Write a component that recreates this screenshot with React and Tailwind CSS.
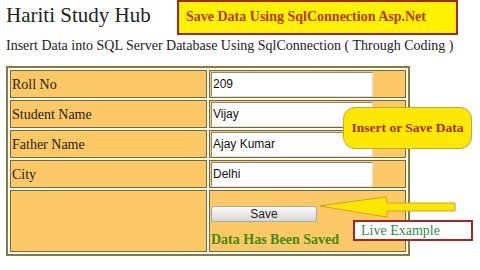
export default function App() {
  const rows = [
    ["Roll No", "209"],
    ["Student Name", "Vijay"],
    ["Father Name", "Ajay Kumar"],
    ["City", "Delhi"],
  ];

  return (
    <div className="relative w-[480px] h-[270px] bg-white overflow-hidden font-['Liberation_Serif',serif] text-[#222]">
      <div className="flex items-start">
        <h1 className="pl-[6px] pt-[4px] w-[177px] text-[21px] leading-[22px] text-[#222]">Hariti Study Hub</h1>
        <div className="w-[281px] h-[35px] bg-[#fff200] border-2 border-[#9b2c1a] flex items-center pl-[7px] pb-[3px]">
          <span className="font-bold text-[14px] text-[#b4380f]">Save Data Using SqlConnection Asp.Net</span>
        </div>
      </div>

      <p className="pl-[6px] mt-[3px] text-[14px] leading-[16px] text-[#222]">
        Insert Data into SQL Server Database Using SqlConnection ( Through Coding )
      </p>

      <table className="ml-[6px] mt-[12px] w-[404px] border-2 border-[#8a7a3c] border-separate border-spacing-[2px] bg-white">
        <tbody>
          {rows.map(([label, value]) => (
            <tr key={label} className="h-[28px]">
              <td className="w-[197px] bg-[#fdc966] border border-[#7a6a30] px-[1px] text-[14px]">{label}</td>
              <td className="bg-[#fdc966] border border-[#7a6a30] px-[1px] py-0">
                <input
                  readOnly
                  value={value}
                  className="block w-[162px] h-[25px] bg-white border border-t-[#8a8a8a] border-l-[#8a8a8a] border-r-[#e0e0e0] border-b-[#e0e0e0] pl-[1px] text-[12px] text-[#111] font-['Liberation_Sans',sans-serif] outline-none"
                />
              </td>
            </tr>
          ))}
          <tr className="h-[62px]">
            <td className="bg-[#fdc966] border border-[#7a6a30]"></td>
            <td className="bg-[#fdc966] border border-[#7a6a30] px-[1px] align-top pt-[15px]">
              <button className="block w-[106px] h-[16px] rounded-[2px] border border-[#a8a8a8] bg-gradient-to-b from-[#fafafa] to-[#d8d8d8] text-[12px] leading-[14px] text-[#222] font-['Liberation_Sans',sans-serif]">
                Save
              </button>
              <div className="mt-[10px] font-bold text-[14px] leading-[16px] text-[#3f8a12]">Data Has Been Saved</div>
            </td>
          </tr>
        </tbody>
      </table>

      <div className="absolute left-[343px] top-[107px] w-[129px] h-[42px] rounded-[12px] border border-[#c8a23a] bg-[#ffe800] flex items-center justify-center">
        <span className="font-bold text-[13.5px] text-[#a82c12]">Insert or Save Data</span>
      </div>

      <svg className="absolute left-[318px] top-[195px]" width="140" height="24" viewBox="0 0 140 24">
        <path
          d="M2 11 Q36 6 68 2 L69 8 L137 8 L137 16 L69 16 L69 22 Q36 17 2 11 Z"
          fill="#ffe600"
          stroke="#c9a22c"
          strokeWidth="1"
        />
      </svg>

      <div className="absolute left-[353px] top-[220px] w-[120px] h-[21px] border-2 border-[#a3262a] bg-white flex items-center pl-[6px]">
        <span className="text-[14px] text-[#2e8a4a]">Live Example</span>
      </div>
    </div>
  );
}
